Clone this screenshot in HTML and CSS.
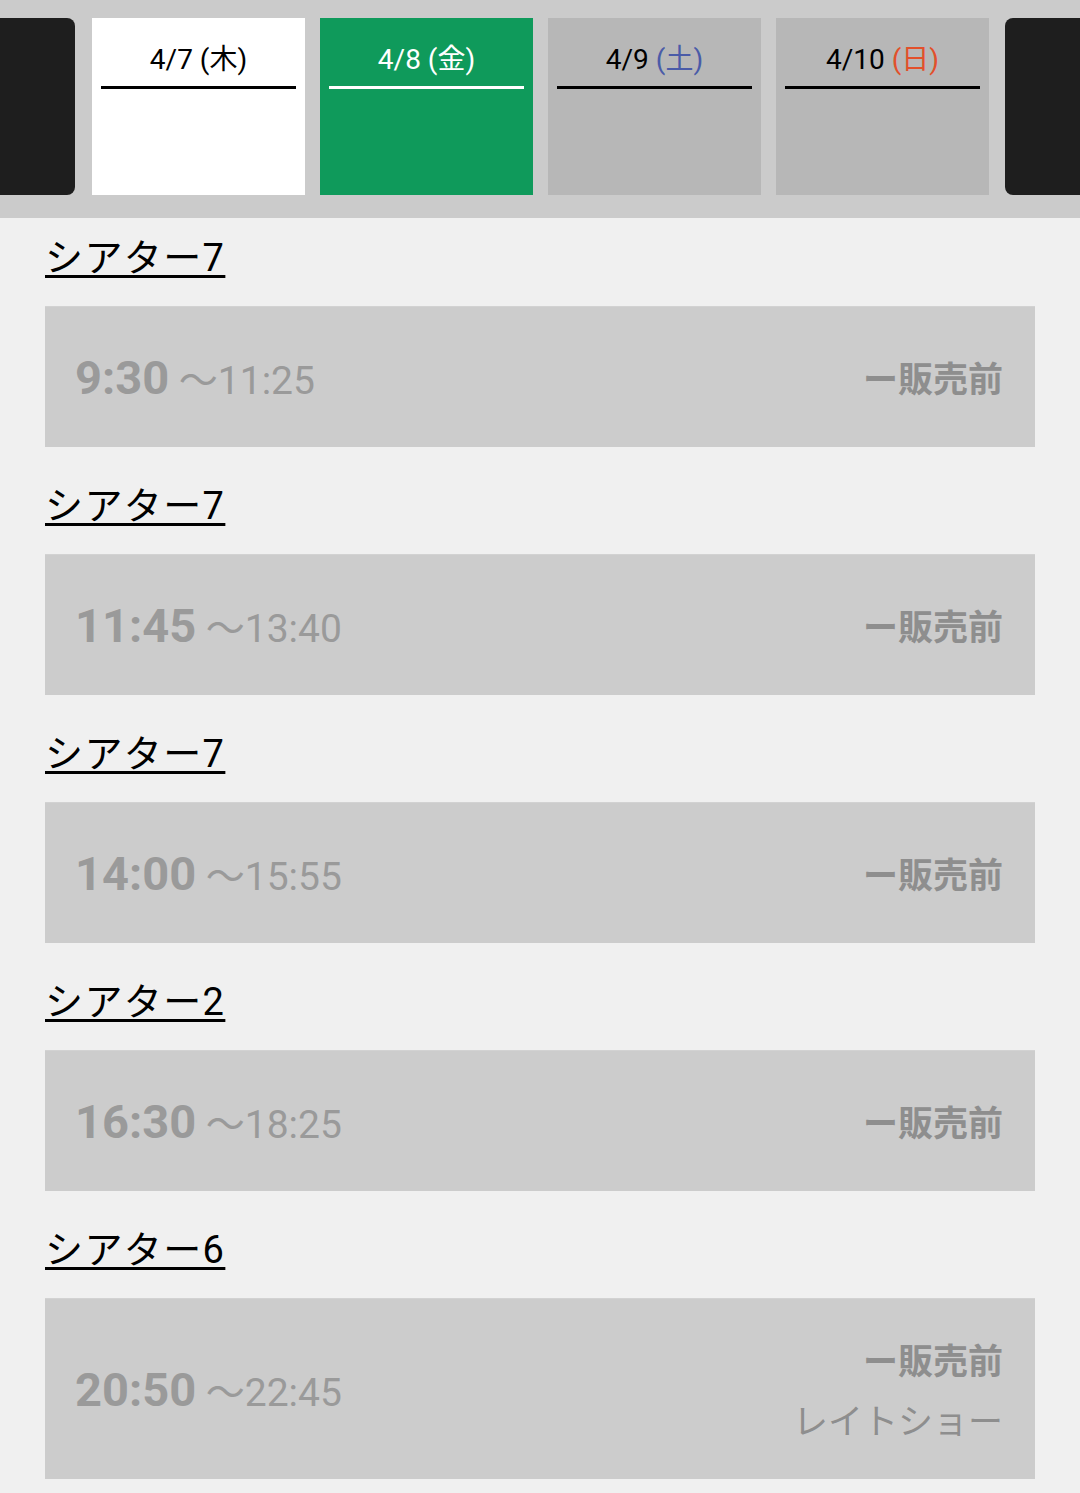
FILE: index.html
```html
<!DOCTYPE html>
<html lang="ja">
<head>
  <meta charset="UTF-8">
  <meta name="viewport" content="width=device-width, initial-scale=1.0">
  <title>上映スケジュール</title>
  <link rel="stylesheet" href="styles.css">
</head>
<body>

  <div class="date-bar">
    <div class="date-track">
      <div class="date-tile nav"></div>
      <div class="date-tile">
        <div class="date-label">4/7 (木)</div>
      </div>
      <div class="date-tile active">
        <div class="date-label">4/8 (金)</div>
      </div>
      <div class="date-tile off">
        <div class="date-label">4/9 <span class="sat">(土)</span></div>
      </div>
      <div class="date-tile off">
        <div class="date-label">4/10 <span class="sun">(日)</span></div>
      </div>
      <div class="date-tile nav"></div>
    </div>
  </div>

  <div class="schedule">
    <div class="show">
      <h2 class="theater"><span>シアター7</span></h2>
      <div class="slot">
        <div class="time"><b>9:30</b> 〜11:25</div>
        <div class="status">
          <div>ー販売前</div>
        </div>
      </div>
    </div>

    <div class="show">
      <h2 class="theater"><span>シアター7</span></h2>
      <div class="slot">
        <div class="time"><b>11:45</b> 〜13:40</div>
        <div class="status">
          <div>ー販売前</div>
        </div>
      </div>
    </div>

    <div class="show">
      <h2 class="theater"><span>シアター7</span></h2>
      <div class="slot">
        <div class="time"><b>14:00</b> 〜15:55</div>
        <div class="status">
          <div>ー販売前</div>
        </div>
      </div>
    </div>

    <div class="show">
      <h2 class="theater"><span>シアター2</span></h2>
      <div class="slot">
        <div class="time"><b>16:30</b> 〜18:25</div>
        <div class="status">
          <div>ー販売前</div>
        </div>
      </div>
    </div>

    <div class="show">
      <h2 class="theater"><span>シアター6</span></h2>
      <div class="slot">
        <div class="time"><b>20:50</b> 〜22:45</div>
        <div class="status">
          <div>ー販売前</div>
          <div class="note">レイトショー</div>
        </div>
      </div>
    </div>
  </div>

</body>
</html>
```

FILE: styles.css
```css
body {
  margin: 0;
  background-color: #f0f0f0;
  font-family: Roboto, "Noto Sans CJK JP", sans-serif;
}

.date-bar {
  background-color: #cbcbcb;
  padding: 18px 0 23px;
  overflow: hidden;
}

.date-track {
  display: flex;
  gap: 15px;
  margin-left: -140px;
}

.date-tile {
  flex: 0 0 213px;
  height: 177px;
  background-color: #ffffff;
  box-sizing: border-box;
  padding: 0 9px;
}

.date-tile.nav {
  flex-basis: 215px;
  background-color: #1e1e1e;
  border-radius: 8px;
  margin-right: 2px;
}

.date-tile.nav:last-child {
  margin-right: 0;
  margin-left: 1px;
}

.date-tile.active {
  background-color: #0f9a5b;
  color: #ffffff;
}

.date-tile.off {
  background-color: #b7b7b7;
}

.date-label {
  padding: 24px 0 8px;
  font-size: 28px;
  line-height: 36px;
  text-align: center;
  border-bottom: 3px solid #000000;
}

.active .date-label {
  border-bottom-color: #ffffff;
}

.sat {
  color: #4a5ba8;
}

.sun {
  color: #e2502b;
}

.schedule {
  padding: 16px 45px 14px;
}

.show {
  margin-bottom: 35px;
}

.theater {
  margin: 0 0 24px;
  font-size: 38px;
  font-weight: normal;
  line-height: 48px;
  color: #000000;
}

.theater span {
  text-decoration: underline;
  text-decoration-thickness: 3px;
  text-underline-offset: 4px;
  letter-spacing: 1.4px;
}

.slot {
  display: flex;
  justify-content: space-between;
  align-items: center;
  min-height: 141px;
  box-sizing: border-box;
  padding: 30px 32px 30px 30px;
  background-color: #cccccc;
  border-top: 1px solid #d2d2d2;
}

.time {
  font-size: 39px;
  color: #9a9a9a;
}

.time b {
  font-size: 47px;
}

.status {
  text-align: right;
  font-family: "Noto Sans CJK JP", sans-serif;
  font-size: 35px;
  line-height: 60px;
  color: #8e8e8e;
  font-weight: bold;
}

.status .note {
  font-weight: normal;
}
```
